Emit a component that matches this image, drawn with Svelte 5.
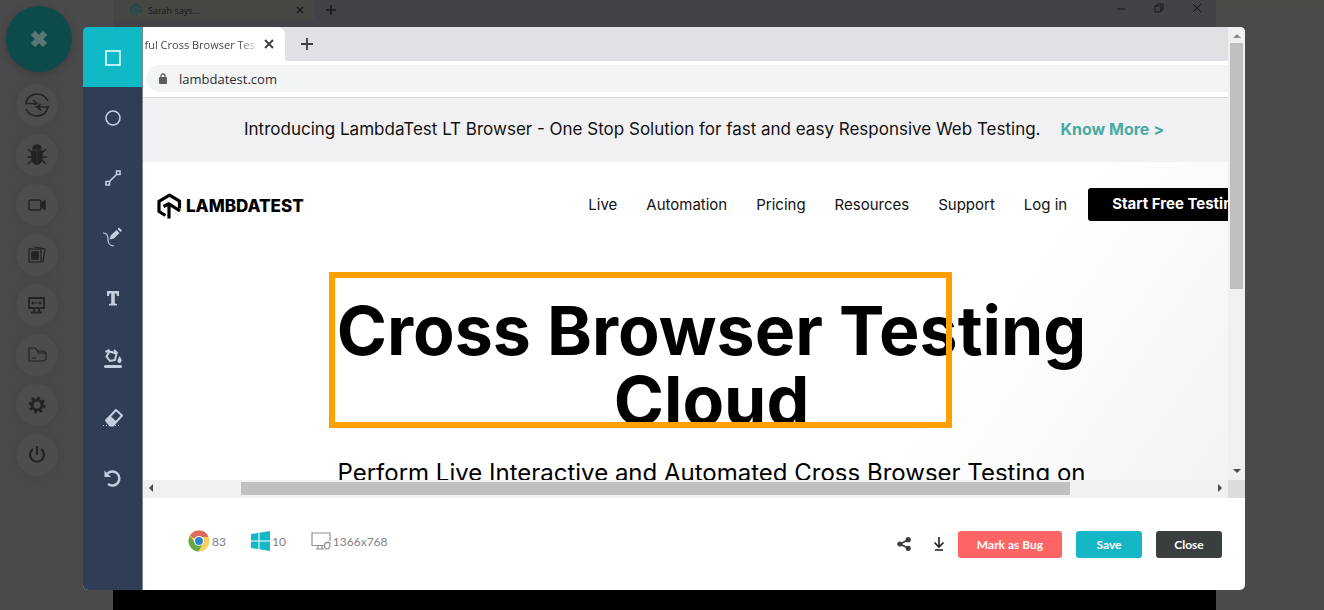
<script>
  const tools = ['Rectangle', 'Circle', 'Line', 'Pencil', 'Text', 'Fill', 'Eraser', 'Undo'];
  const actions = ['Switch', 'Bug', 'Record', 'Gallery', 'Resolution', 'Files', 'Settings', 'Power'];
  const links = ['Live', 'Automation', 'Pricing', 'Resources', 'Support', 'Log in'];
  let selected = $state('Rectangle');
</script>

<div class="screen">
  <div class="backdrop">
    <aside class="rail">
      <button class="toggle" aria-label="Collapse menu">
        <svg width="20" height="20" viewBox="0 0 20 20"><path d="M4 4l12 12M16 4L4 16" stroke="#5d7777" stroke-width="6" /></svg>
      </button>
      {#each actions as name}
        <button class="action" aria-label={name}>
          <svg width="26" height="26" viewBox="0 0 26 26" fill="none" stroke="#232225" stroke-width="1.6">
            {#if name === 'Switch'}
              <path d="M2 11C3 5 8 2 13 2c5 0 9 3 11 7M24 15c-1 6-6 9-11 9-5 0-9-3-11-7M1 11.500h12M9 8l4 3.500-3 1M25 15H13l4 3.500M13 15l4-3" />
            {:else if name === 'Bug'}
              <path d="M9 7a4 4 0 0 1 8 0z" fill="#232225" />
              <path d="M8 9h4v13C9 21 8 18 8 15zM14 9h4v6c0 3-1 6-4 7z" fill="#232225" />
              <path d="M8 11L4 7M8 15H3M8 18l-4 4M18 11l4-4M18 15h5M18 18l4 4" />
            {:else if name === 'Record'}
              <rect x="5" y="8" width="12" height="10" rx="2" /><path d="M17 12l4-3v8l-4-3z" fill="#232225" />
            {:else if name === 'Gallery'}
              <rect x="5" y="7" width="12" height="13" stroke-width="1.200" /><rect x="8" y="10" width="6" height="7" fill="#232225" />
              <path d="M10 5l11 2-2 13" stroke-width="1.200" />
            {:else if name === 'Resolution'}
              <path d="M5 6h15v10H5zM10 17v3M15 17v3M7 20.500h11" stroke-width="1.800" /><path d="M7.500 11h10M9.500 9.500L8 11l1.500 1.500M15.500 9.500L17 11l-1.500 1.500" stroke-width="1.200" />
            {:else if name === 'Files'}
              <path d="M5 19V6h6l3 3h6l2 2v6l-2 2H5M8 16h4M14 9v2h8" stroke-width="1.200" />
            {:else if name === 'Settings'}
              <circle cx="13" cy="13" r="5" stroke-width="3" />
              <circle cx="13" cy="13" r="7.200" stroke-width="2.600" stroke-dasharray="2.800 2.855" />
            {:else}
              <path d="M9 7a7 7 0 1 0 8 0M13 4v9" stroke-width="2.200" />
            {/if}
          </svg>
        </button>
      {/each}
    </aside>
    <div class="remote">
      <div class="remote-tabs">
        <div class="remote-tab">
          <svg width="14" height="14" viewBox="0 0 26 28" fill="none" stroke="#234d4b" stroke-width="4"><path d="M9 23l-6-4V9l10-6 10 6v9M8 14l5-2 10 7M13 12v13" /></svg>
          <span>Sarah says...</span>
          <svg class="push" width="8" height="8" viewBox="0 0 8 8" stroke="#19191b" stroke-width="1.500"><path d="M1 1l6 6M7 1L1 7" /></svg>
        </div>
        <svg class="plus" width="12" height="12" viewBox="0 0 12 12" stroke="#19191b" stroke-width="1.500"><path d="M1 6h10M6 1v10" /></svg>
        <div class="window-controls">
          <svg width="10" height="10" viewBox="0 0 10 10"><path d="M1 6h8" /></svg>
          <svg width="10" height="10" viewBox="0 0 10 10"><path d="M1 3h6v6H1zM3 3V1h6v6H7" /></svg>
          <svg width="10" height="10" viewBox="0 0 10 10"><path d="M1 1l8 8M9 1L1 9" /></svg>
        </div>
      </div>
    </div>
    <div class="edge"></div>
  </div>

  <div class="overlay">
    <div class="modal" role="dialog" aria-label="Screenshot editor">
      <div class="tools">
        {#each tools as name}
          <button class="tool" class:active={selected === name} aria-label={name} onclick={() => (selected = name)}>
            <svg width="22" height="22" viewBox="0 0 22 22" fill="none" stroke="currentColor" stroke-width="1.600">
              {#if name === 'Rectangle'}
                <rect x="4" y="4" width="14" height="14" />
              {:else if name === 'Circle'}
                <circle cx="11" cy="11" r="7" />
              {:else if name === 'Line'}
                <path d="M14.500 4h3.500v3.500h-3.500zM4 14.500h3.500V18H4zM7.500 14.500l7-7" />
              {:else if name === 'Pencil'}
                <path d="M1 6c5 0 5 4 5 7s2 6 6 6" stroke-width="1.200" />
                <path d="M7.500 12.500l1.500-4.500L14.500 3l3 3L12 11.500zM15.500 2L17 .5l3 3L18.500 5z" fill="currentColor" stroke="none" />
              {:else if name === 'Text'}
                <path d="M5 4h12v5h-2l-.6-2.500H12.800V16.500l2.200.5v1.500H7V17l2.200-.5V6.500H7.600L7 9H5z" fill="currentColor" stroke="none" />
              {:else if name === 'Fill'}
                <path d="M3.500 19.500h15" stroke-width="3" stroke-linecap="round" />
                <path d="M7.500 4.500l7 2-1.500 6.500-5 1-3.500-4.500zM3.500 5l4-2M12 3l3.500 3.500" stroke-width="2" />
                <path d="M17.500 9c2 3 2.500 4 2 5a2 2 0 0 1-4 0c0-1 1-3 2-5z" fill="currentColor" stroke="none" />
              {:else if name === 'Eraser'}
                <path d="M4 13.500L14 3l6 5.500L11 18.500H8z" stroke-width="2" stroke-linejoin="round" />
                <path d="M3.500 13L8 8.500 14.500 14.500 11 18.500H8z" fill="currentColor" stroke="none" />
                <path d="M1 18.500h16" stroke-dasharray="1 2" stroke-width="1.200" />
              {:else}
                <path d="M5.500 6.500a7 7 0 1 1 .5 10.500" stroke-width="2.400" />
                <path d="M2.500 3.500v6.500h6.500z" fill="currentColor" stroke="none" />
              {/if}
            </svg>
          </button>
        {/each}
      </div>

      <div class="main">
        <div class="capture">
          <div class="viewport">
            <div class="tabstrip">
              <div class="tab">
                <span class="tab-title">ful Cross Browser Tes</span>
                <svg width="10" height="10" viewBox="0 0 10 10" stroke="#3b3d40" stroke-width="1.800"><path d="M1 1l8 8M9 1L1 9" /></svg>
              </div>
              <svg class="newtab" width="14" height="14" viewBox="0 0 14 14" stroke="#3b3d40" stroke-width="1.800"><path d="M1 7h12M7 1v12" /></svg>
            </div>
            <div class="address">
              <div class="field">
                <svg width="10" height="12" viewBox="0 0 10 12"><rect x="1" y="4" width="8" height="7" rx="1" fill="#5b5e62" /><path d="M3 5V3a2 2 0 0 1 4 0v2" fill="none" stroke="#5b5e62" stroke-width="1.300" /></svg>
                <span>lambdatest.com</span>
              </div>
            </div>
            <div class="site">
              <div class="banner">
                <span>Introducing LambdaTest LT Browser - One Stop Solution for fast and easy Responsive Web Testing.</span>
                <a href="#more">Know More &gt;</a>
              </div>
              <header>
                <a class="logo" href="#home">
                  <svg width="25" height="27" viewBox="0 0 25 27" fill="none" stroke="#000" stroke-width="3.200" stroke-linejoin="round"><path d="M8.500 22.500l-6.500-4V8.300L12.500 2.200l10 6v7.300M6.500 13.500L12 10.800 23 18M12 11v14.500" /></svg>
                  <span>LAMBDATEST</span>
                </a>
                <nav>
                  {#each links as link}<a href="#nav">{link}</a>{/each}
                </nav>
                <a class="cta" href="#start">Start Free Testing</a>
              </header>
              <div class="hero">
                <h1>Cross Browser Testing<br />Cloud</h1>
                <p>Perform Live Interactive and Automated Cross Browser Testing on</p>
              </div>
            </div>
            <div class="mark"></div>
          </div>
          <div class="vbar">
            <svg width="8" height="4" viewBox="0 0 8 4"><path d="M0 4l4-4 4 4z" fill="#8c8c8e" /></svg>
            <div class="vthumb"></div>
            <svg class="last" width="8" height="4" viewBox="0 0 8 4"><path d="M0 0h8L4 4z" fill="#4a4a4c" /></svg>
          </div>
          <div class="hbar">
            <svg width="4" height="8" viewBox="0 0 4 8"><path d="M4 0v8L0 4z" fill="#4a4a4c" /></svg>
            <div class="htrack"><div class="hthumb"></div></div>
            <svg width="4" height="8" viewBox="0 0 4 8"><path d="M0 0v8l4-4z" fill="#4a4a4c" /></svg>
          </div>
          <div class="corner"></div>
        </div>

        <footer>
          <div class="info">
            <span class="spec">
              <svg width="22" height="22" viewBox="0 0 22 22">
                <circle cx="11" cy="11" r="10.500" fill="#f8cf5f" />
                <path d="M11 11L1.900 5.800A10.500 10.500 0 0 1 20.100 5.800L20 7H11z" fill="#dc6a60" />
                <path d="M1.900 5.800A10.500 10.500 0 0 0 10.500 21.500L15 13 11 11 7 13z" fill="#66a944" />
                <circle cx="11" cy="11" r="5" fill="#fff" /><circle cx="11" cy="11" r="3.900" fill="#2a86c8" />
              </svg>83
            </span>
            <span class="spec">
              <svg width="19" height="20" viewBox="0 0 19 20" fill="#15b8c6"><path d="M0 3l7.500-1v7.500H0zM8.500 1.800L19 0v9.500H8.500zM0 10.500h7.500V18L0 17zM8.500 10.500H19V20L8.500 18.200z" /></svg>10
            </span>
            <span class="spec">
              <svg width="20" height="18" viewBox="0 0 20 18" fill="none" stroke="#8f9093" stroke-width="1.200"><path d="M13 13.500H1V1h18v8M7 14v3M5 17h8M11 14v3" /><path d="M14 11c2 0 3-1 3-1 1 1 2 1 2 1 0 4-1 6-3 6s-3-2-2-6z" /></svg>1366x768
            </span>
          </div>
          <button class="icon" aria-label="Share">
            <svg width="14" height="14" viewBox="0 0 14 14" fill="#3a3b3e" stroke="#3a3b3e" stroke-width="1.800"><path d="M11 3L3 7l8 4" fill="none" /><circle cx="11.200" cy="2.700" r="1.700" /><circle cx="2.800" cy="7" r="1.700" /><circle cx="11.200" cy="11.300" r="1.700" /></svg>
          </button>
          <button class="icon" aria-label="Download">
            <svg width="12" height="14" viewBox="0 0 12 14" fill="none" stroke="#222" stroke-width="1.600"><path d="M6 0v10M1.500 5.500L6 10l4.500-4.500M2 13h8" /></svg>
          </button>
          <button class="btn bug">Mark as Bug</button>
          <button class="btn save">Save</button>
          <button class="btn close">Close</button>
        </footer>
      </div>
    </div>
  </div>
</div>

<style>
  :global(body) { margin: 0; background: #4a494b; }
  * { box-sizing: border-box; }
  button { border: 0; padding: 0; font: inherit; cursor: pointer; }
  a { color: inherit; text-decoration: none; }
  svg { display: block; flex: none; }

  .screen { display: grid; min-height: 100vh; font-family: Inter, "Liberation Sans", sans-serif; }
  .backdrop, .overlay { grid-area: 1 / 1; min-width: 0; }
  .backdrop { display: flex; background: #4a494b; }
  .overlay { display: flex; padding: 27px 79px 20px 83px; }

  .rail { width: 113px; flex: none; padding: 6px 0 0 6px; }
  .toggle { display: grid; place-items: center; width: 66px; height: 66px; margin-bottom: 12px; border-radius: 50%; background: #0c4b49; box-shadow: 0 2px 6px #3c3b3d; }
  .action { display: grid; place-items: center; width: 42px; height: 42px; margin: 0 0 8px 10px; border-radius: 50%; background: #4d4c4e; box-shadow: 0 0 8px #464547; }

  .remote { flex: 1; background: linear-gradient(#434347 0 590px, #000 590px); }
  .remote-tabs { display: flex; align-items: center; height: 20px; font-family: "Open Sans", sans-serif; font-size: 9px; color: #19191b; }
  .remote-tab { display: flex; align-items: center; gap: 5px; width: 201px; height: 20px; padding: 0 10px 0 16px; background: #444742; }
  .push { margin-left: auto; }
  .plus { margin-left: 11px; }
  .window-controls { display: flex; gap: 28px; margin: 0 14px 5px auto; fill: none; stroke: #161618; }
  .edge { width: 108px; background: linear-gradient(#4b4d47, #4a494b 30px); }

  .modal { display: flex; flex: 1; min-width: 0; overflow: hidden; border-radius: 5px; background: #fff; }
  .tools { width: 60px; flex: none; background: #303d57; border-right: 1px solid #7d8494; }
  .tool { display: grid; place-items: center; width: 59px; height: 60px; padding: 1px 0 0 1px; background: none; color: #c3cee0; }
  .tool.active { background: #10b9c6; color: #e8ffff; }

  .main { display: flex; flex: 1; flex-direction: column; min-width: 0; }
  .capture { display: grid; grid-template: 453px 18px / minmax(0, 1fr) 17px; }
  .viewport { position: relative; overflow: hidden; background: linear-gradient(125deg, #fff 75%, #f3f2f5); }

  .tabstrip { display: flex; align-items: center; height: 34px; background: #e0e0e5; }
  .tab { display: flex; align-items: center; justify-content: flex-end; gap: 9px; width: 142px; height: 34px; padding-right: 11px; overflow: hidden; border-radius: 0 8px 0 0; background: #fff; }
  .tab-title { font-family: "Open Sans", sans-serif; font-size: 11px; color: #45474b; white-space: nowrap; mask-image: linear-gradient(to right, #000 85%, #0004); }
  .newtab { margin-left: 15px; }
  .address { height: 37px; padding: 4px 0 5px 3px; background: #fff; border-bottom: 1px solid #d5d6d9; }
  .field { display: flex; align-items: center; gap: 11px; height: 27px; padding-left: 12px; border-radius: 14px 0 0 14px; background: #f3f4f6; font-family: "Open Sans", sans-serif; font-size: 13px; color: #2c2d30; }

  .site { width: calc(100% + 52px); }
  .banner { display: flex; align-items: center; justify-content: center; gap: 20px; height: 64px; padding: 0 15px 2px 0; background: #f1f1f3; font-size: 17px; white-space: nowrap; color: #111; }
  .banner a { font-size: 16px; font-weight: 700; color: #45aba3; }
  header { display: flex; align-items: center; height: 84px; padding: 0 14px; font-size: 15px; color: #111; }
  .logo { display: flex; align-items: center; gap: 4px; margin: 4px auto 0 0; font-size: 17px; font-weight: 800; color: #000; }
  nav { display: flex; gap: 29px; margin-right: 21px; white-space: nowrap; }
  .cta { height: 33px; padding: 0 24px; border-radius: 3px; background: #000; color: #fff; font-weight: 700; line-height: 32px; white-space: nowrap; }
  .hero { padding-top: 49px; text-align: center; color: #000; white-space: nowrap; }
  h1 { margin: 0; font-size: 68px; font-weight: 700; line-height: 70px; }
  p { margin: 22px 0 0; font-size: 24px; line-height: 32px; }
  .mark { position: absolute; top: 245px; left: 186px; width: 623px; height: 156px; border: 6px solid #ffa000; }

  .vbar { display: flex; flex-direction: column; align-items: center; padding: 7px 0; background: #f0f0f2; }
  .vthumb { width: 13px; height: 246px; margin-top: 5px; background: #c0c0c2; }
  .last { margin-top: auto; }
  .hbar { display: flex; align-items: center; gap: 2px; padding: 0 6px 2px; background: #f1f0f1; }
  .htrack { flex: 1; padding-left: 8%; }
  .hthumb { width: 85%; height: 13px; background: #c0c0c0; }
  .corner { background: #dcdbdd; }

  footer { display: flex; flex: 1; align-items: center; min-height: 92px; padding: 0 23px 0 45px; font-family: Lato, sans-serif; }
  .info { display: flex; gap: 25px; margin: 0 auto 6px 0; }
  .spec { display: flex; align-items: center; gap: 2px; font-size: 12px; color: #808185; }
  .icon { display: grid; place-items: center; width: 20px; height: 28px; margin-right: 15px; background: none; }
  .icon + .btn { margin-left: -6px; }
  .btn { width: 66px; height: 27px; margin-left: 14px; border-radius: 3px; font-size: 12px; font-weight: 700; color: #fff; }
  .bug { width: 104px; background: #ff6565; }
  .save { background: #15b7c7; }
  .close { background: #3a3e3f; }
</style>
